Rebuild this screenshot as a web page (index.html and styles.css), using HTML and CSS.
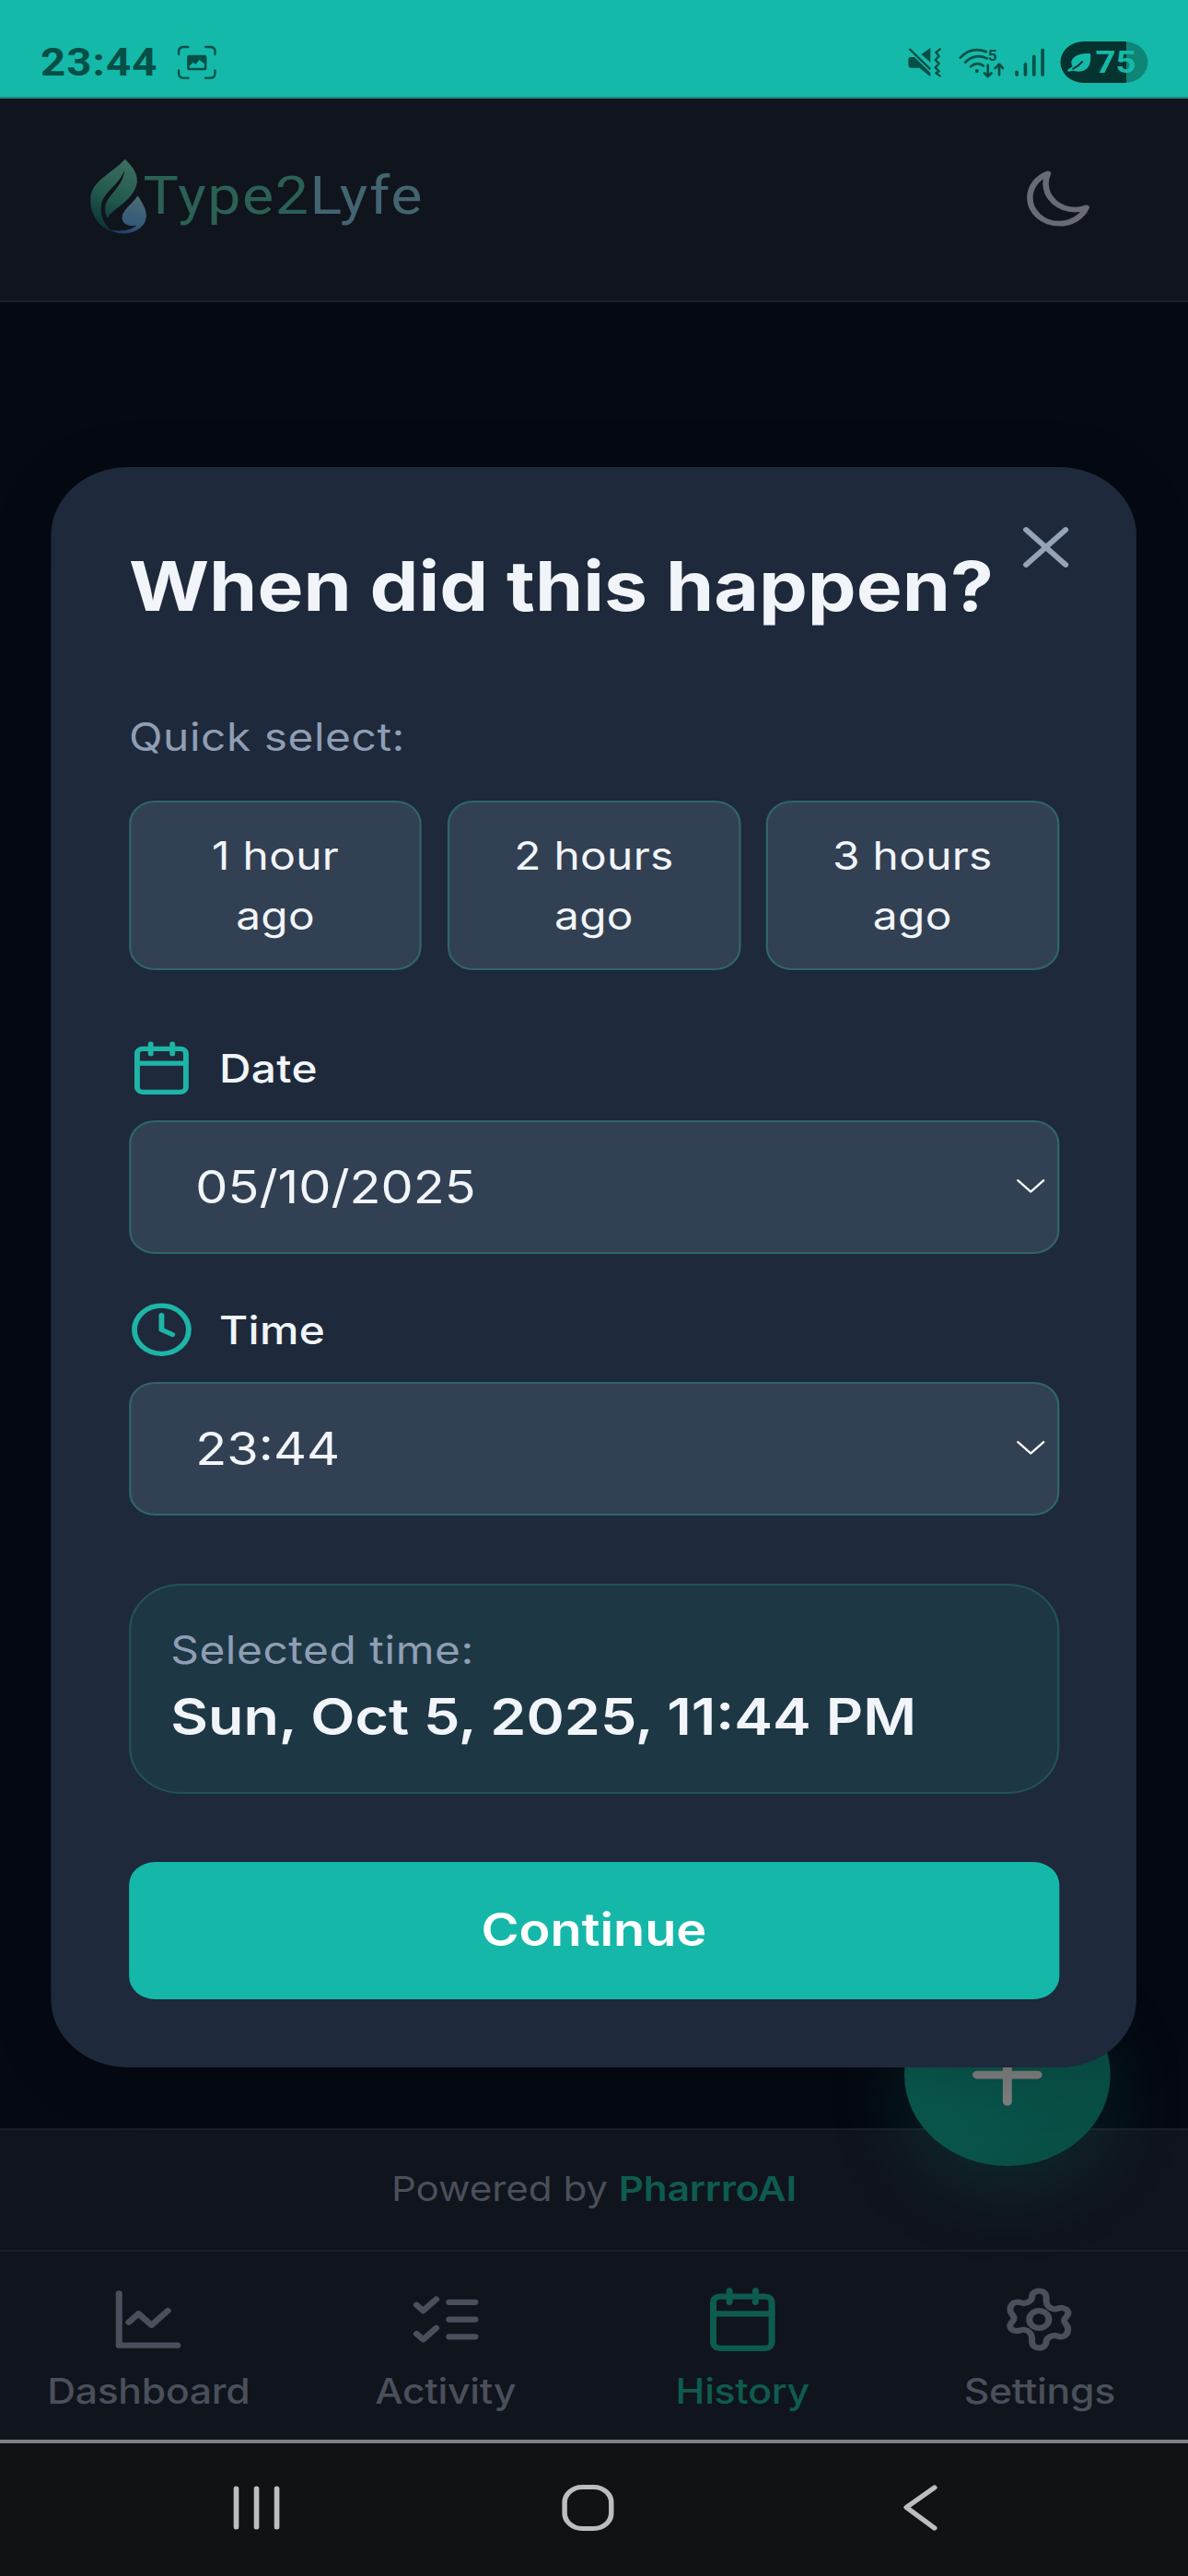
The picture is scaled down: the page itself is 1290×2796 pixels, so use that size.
FILE: index.html
```
<!DOCTYPE html>
<html lang="en">
<head>
<meta charset="utf-8">
<title>Type2Lyfe</title>
<link rel="stylesheet" href="styles.css">
</head>
<body>
<div class="screen">
  <div class="status-bar">
    <span class="clock">23:44</span>
    <svg class="shot-icon" viewBox="335 28 128 112" preserveAspectRatio="none" fill="none" stroke="currentColor" stroke-width="7" stroke-linecap="round">
      <path d="M341 58V48Q341 34 357 34H372M428 34H443Q459 34 459 48V58M459 110V120Q459 135 443 135H428M372 135H357Q341 135 341 120V110"/>
      <path stroke="none" fill="currentColor" fill-rule="evenodd" d="M375 60H425Q432 60 432 67V103Q432 110 425 110H375Q368 110 368 103V67Q368 60 375 60ZM376 96V102H424V88L408 76L396 90L388 84Z"/>
    </svg>
    <span class="grow"></span>
    <svg class="mute-icon" viewBox="45 62 112 98" preserveAspectRatio="none" fill="currentColor">
      <path d="M120 65V112L90 86ZM48 100Q48 95 54 95H68L120 146V159L84 130H58Q48 130 48 120Z"/>
      <path fill="none" stroke="currentColor" stroke-width="7" stroke-linecap="round" d="M53 70L118 133"/>
      <path fill="none" stroke="currentColor" stroke-width="7" stroke-linecap="round" stroke-linejoin="round" d="M151 69L138 80L148 92L136 104L148 116L136 129L148 141L138 147L151 156"/>
    </svg>
    <svg class="wifi-icon" viewBox="210 62 152 104" preserveAspectRatio="none" fill="none" stroke="currentColor" stroke-width="8" stroke-linecap="round" stroke-linejoin="round">
      <path d="M216 100Q250 62 300 80M232 115Q264 84 303 102M250 129Q270 112 291 126"/>
      <circle cx="270" cy="143" r="6" fill="currentColor" stroke="none"/>
      <path d="M306 124V160M294 150L306 161L318 150M343 156V122M330 134L343 121L355 134"/>
      <text class="wifi-band" x="306" y="111">5</text>
    </svg>
    <svg class="signal-icon" viewBox="393 62 100 98" preserveAspectRatio="none" stroke="currentColor" stroke-width="11" stroke-linecap="round">
      <path d="M400 144V152M428 118V152M456 93V152M484 72V152"/>
    </svg>
    <div class="battery">
      <svg class="leaf-icon" viewBox="565 78 82 70" preserveAspectRatio="none">
        <path fill="#15b9a9" d="M584 126C570 100 600 82 640 84Q643 84 643 88C645 122 634 143 604 143C592 143 588 137 574 143Q566 144 568 137Q576 133 584 126Z"/>
        <path fill="none" stroke="#05332f" stroke-width="6" stroke-linecap="round" d="M586 134Q604 126 616 111"/>
      </svg>
      <span>75</span>
    </div>
  </div>

  <header class="app-header">
    <div class="logo">
      <svg class="logo-mark" viewBox="52 394 188 248" preserveAspectRatio="none">
        <defs>
          <linearGradient id="leaf" x1="0.6" y1="0" x2="0.35" y2="1">
            <stop offset="0" stop-color="#3b6d60"/><stop offset="0.55" stop-color="#21584c"/><stop offset="1" stop-color="#0a3033"/>
          </linearGradient>
          <linearGradient id="drop" x1="0.6" y1="0" x2="0.4" y2="1">
            <stop offset="0" stop-color="#4b6c73"/><stop offset="0.75" stop-color="#33587a"/><stop offset="1" stop-color="#1d3d66"/>
          </linearGradient>
        </defs>
        <path fill="url(#leaf)" d="M167 396C125 445 55 465 55 530C55 585 90 622 128 634C100 612 86 580 90 548C96 500 150 482 165 432C164 480 120 505 106 540C100 558 103 578 111 588C128 556 200 530 207 470C209 435 183 412 167 396Z"/>
        <path fill="url(#drop)" d="M209 515C225 540 237 560 237 580C237 612 205 640 157 639C140 638 128 633 120 627C150 633 185 630 206 612C188 617 158 612 158 586C160 560 190 545 209 515Z"/>
      </svg>
      <span class="logo-text"><span class="logo-a">Type2</span><span class="logo-b">Lyfe</span></span>
    </div>
    <svg class="moon-icon" viewBox="0 0 24 24" fill="none" stroke="currentColor" stroke-width="2" stroke-linecap="round" stroke-linejoin="round">
      <path d="M21.752 15.002A9.72 9.72 0 0 1 18 15.75c-5.385 0-9.75-4.365-9.75-9.75 0-1.33.266-2.597.748-3.752A9.753 9.753 0 0 0 3 11.25C3 16.635 7.365 21 12.75 21a9.753 9.753 0 0 0 9.002-5.998Z"/>
    </svg>
  </header>

  <main class="page"></main>

  <footer class="powered"><p>Powered by <b>PharrroAI</b></p></footer>

  <nav class="tabs">
    <a class="tab">
      <svg class="icon" viewBox="0 0 24 24"><path d="M3 3v18h18M6 13l3-3 4 4 5-5"/></svg>
      <span>Dashboard</span>
    </a>
    <a class="tab">
      <svg class="icon" viewBox="0 0 24 24"><path d="M3 7l2 2 4-4M3 17l2 2 4-4M13 6h8M13 12h8M13 18h8"/></svg>
      <span>Activity</span>
    </a>
    <a class="tab active">
      <svg class="icon" viewBox="0 0 24 24"><path d="M8 2v4M16 2v4M3 10h18"/><rect x="3" y="4" width="18" height="18" rx="2"/></svg>
      <span>History</span>
    </a>
    <a class="tab">
      <svg class="icon" viewBox="0 0 24 24"><path d="M9.8 4.4C9.8 3 10.7 2.1 12 2.1S14.2 3.1 14.2 4.4V5.6C14.2 7 15.2 8.2 16.5 8.4C17.6 8.5 18.2 7.9 19.1 8C20.4 8.2 21.1 9.1 20.9 10.1C20.7 11 19.7 11.5 19.7 12.4C19.7 13.4 20.9 14 20.9 15.4C20.9 17 19.9 18 18.8 18C17.8 18.1 17.4 17.5 16.6 17.6C15.2 17.8 14.2 18.8 14.2 19.6C14.2 21 13.3 21.9 12 21.9S9.8 20.9 9.8 19.6V18.4C9.8 17 8.8 15.8 7.5 15.6C6.4 15.5 5.8 16.1 4.9 16C3.6 15.8 2.9 14.9 3.1 13.9C3.3 13 4.3 12.5 4.3 11.6C4.3 10.6 3.1 10 3.1 8.6C3.1 7 4.1 6 5.2 6C6.2 5.9 6.6 6.5 7.4 6.4C8.8 6.2 9.8 5.2 9.8 4.4Z"/><circle cx="12" cy="12" r="3"/></svg>
      <span>Settings</span>
    </a>
  </nav>

  <div class="system-nav">
    <svg class="recents" viewBox="0 0 48 50"><path d="M4 4V46M23.5 4V46M43 4V46"/></svg>
    <svg class="home" viewBox="0 0 50 50"><rect x="2.5" y="2.5" width="45" height="45" rx="17"/></svg>
    <svg class="back" viewBox="0 0 34 50"><path d="M31 3L4 24.5L31 47"/></svg>
  </div>

  <button class="fab" aria-label="Add">
    <svg viewBox="0 0 24 24"><path d="M12 5v14M5 12h14"/></svg>
  </button>

  <section class="modal">
    <button class="close" aria-label="Close"><svg viewBox="0 0 44 44"><path d="M3 3L41 41M41 3L3 41"/></svg></button>
    <h1>When did this happen?</h1>
    <p class="hint">Quick select:</p>
    <div class="quick">
      <button>1 hour<br>ago</button>
      <button>2 hours<br>ago</button>
      <button>3 hours<br>ago</button>
    </div>
    <div class="label">
      <svg class="icon" viewBox="0 0 24 24"><path d="M8 2v4M16 2v4M3 10h18"/><rect x="3" y="4" width="18" height="18" rx="2"/></svg>
      <span>Date</span>
    </div>
    <div class="field"><span>05/10/2025</span><svg viewBox="0 0 27 15"><path d="M1.2 1.2L13.5 13.5L25.8 1.2"/></svg></div>
    <div class="label label-time">
      <svg class="icon" viewBox="0 0 24 24"><circle cx="12" cy="12" r="10"/><path d="M12 6v6l4 2"/></svg>
      <span>Time</span>
    </div>
    <div class="field"><span>23:44</span><svg viewBox="0 0 27 15"><path d="M1.2 1.2L13.5 13.5L25.8 1.2"/></svg></div>
    <div class="selected">
      <p class="hint">Selected time:</p>
      <p class="value">Sun, Oct 5, 2025, 11:44 PM</p>
    </div>
    <button class="continue">Continue</button>
  </section>
</div>
</body>
</html>
```
FILE: styles.css
```
* { box-sizing: border-box; margin: 0; padding: 0; }

body {
  width: 1290px;
  height: 2796px;
  overflow: hidden;
  background: #050912;
}

/* The whole display is drawn 13% wider than its natural proportions. */
.screen {
  position: relative;
  display: flex;
  flex-direction: column;
  width: 1141.6px;
  height: 2796px;
  overflow: hidden;
  transform: scaleX(1.13);
  transform-origin: 0 0;
  background: #050912;
  font-family: Inter, "Liberation Sans", sans-serif;
  font-size: 42.3px;
  color: #f1f5f9;
}

button { border: 0; font: inherit; color: inherit; }

.icon {
  fill: none;
  stroke: currentColor;
  stroke-width: 2;
  stroke-linecap: round;
  stroke-linejoin: round;
}

/* Status bar */
.status-bar {
  display: flex;
  flex: none;
  align-items: center;
  height: 107px;
  padding: 30px 38.7px 0 39px;
  border-bottom: 2px solid #22897f;
  background: #15b9a9;
  color: #064f47;
}
.clock { font: 700 42px/50px Roboto, sans-serif; letter-spacing: 0.9px; }
.shot-icon { width: 37.8px; height: 37.3px; margin-left: 18.3px; }
.grow { flex: 1; }
.mute-icon { width: 33px; height: 32.7px; margin-right: 15.6px; }
.wifi-icon { width: 44.8px; height: 34.7px; margin-right: 9px; }
.wifi-band { font: 700 52px Roboto, sans-serif; fill: currentColor; stroke: none; }
.signal-icon { width: 29.5px; height: 32.7px; margin-right: 14.7px; }
.battery {
  display: flex;
  align-items: center;
  gap: 3px;
  width: 84px;
  height: 45px;
  padding-left: 6.5px;
  border-radius: 22.5px;
  background: linear-gradient(90deg, #05332f 75.3%, #0f8577 75.3%);
  color: #15b9a9;
  font: 700 34px/45px Roboto, sans-serif;
}
.leaf-icon { width: 24.2px; height: 23.3px; }

/* App header */
.app-header {
  display: flex;
  flex: none;
  align-items: center;
  justify-content: space-between;
  height: 221px;
  padding: 0 91px 7px 86.4px;
  border-bottom: 2px solid #1b202b;
  background: #10141c;
}
.logo { display: flex; align-items: center; }
.logo-mark { width: 55.5px; height: 82.6px; }
.logo-text { margin-left: -4.3px; font: 400 57px/70px Roboto, sans-serif; letter-spacing: 1.4px; }
.logo-a { color: #2b6154; }
.logo-b { color: #436471; }
.moon-icon { width: 69.4px; height: 69.4px; margin-top: 8px; color: #686b73; }

.page { flex: 1; }

/* Footer */
.powered {
  flex: none;
  height: 132px;
  border-top: 2px solid #1a1f28;
  background: #10141c;
  color: #4a4f5b;
  font-size: 37.4px;
  letter-spacing: -0.1px;
  line-height: 128px;
  text-align: center;
}
.powered b { font-weight: 600; color: #0e5b50; }

.tabs {
  display: grid;
  flex: none;
  grid-template-columns: repeat(4, 1fr);
  height: 206px;
  border-top: 2px solid #1a1f28;
  background: #10141c;
}
.tab {
  display: flex;
  flex-direction: column;
  align-items: center;
  padding-top: 36px;
  color: #4a4f5b;
  font-size: 37.8px;
  font-weight: 500;
  letter-spacing: -0.25px;
  line-height: 50px;
}
.tab .icon { width: 75px; height: 75px; margin-bottom: 15px; }
.tab.active { color: #0e5b50; }

/* System navigation */
.system-nav {
  display: flex;
  flex: none;
  align-items: center;
  height: 148px;
  padding: 0 0 5px 222.5px;
  border-top: 4px solid #7c8088;
  background: #111216;
}
.system-nav svg { height: 50px; fill: none; stroke: #bdbdbf; stroke-width: 5; stroke-linecap: round; stroke-linejoin: round; }
.recents { width: 48px; margin-right: 269px; }
.home { width: 50px; margin-right: 277px; }
.back { width: 34px; }

/* Floating add button, partly beneath the dialog */
.fab {
  position: absolute;
  left: 869px;
  top: 2153px;
  display: grid;
  place-items: center;
  width: 198px;
  height: 198px;
  border-radius: 50%;
  background: linear-gradient(135deg, #0a5d53, #084c43);
  box-shadow: 0 25px 75px rgba(10, 93, 83, 0.3);
}
.fab svg { width: 100px; height: 100px; fill: none; stroke: #808080; stroke-width: 2.1; stroke-linecap: round; }

/* Dialog */
.modal {
  position: absolute;
  left: 49.4px;
  top: 506.5px;
  width: 1042.7px;
  height: 1737.5px;
  padding: 79px 74.5px 0;
  border-radius: 74px;
  background: #1e293b;
  box-shadow: 0 10px 60px rgba(5, 10, 14, 0.2);
}
.close { position: absolute; top: 65px; right: 65px; width: 44px; height: 44px; background: none; }
.close svg { display: block; fill: none; stroke: #94a3b8; stroke-width: 5.5; stroke-linecap: round; }
.modal h1 { font-size: 74.3px; line-height: 100px; font-weight: 700; white-space: nowrap; }
.hint { color: #8f9eb4; line-height: 60px; letter-spacing: 0.5px; }
.modal > .hint { margin-top: 84px; }
.quick {
  display: grid;
  grid-template-columns: repeat(3, 1fr);
  gap: 24.5px;
  margin-top: 39.5px;
}
.quick button, .field {
  border: 2px solid #2e656b;
  border-radius: 25px;
  background: #324053;
}
.quick button { height: 184px; padding-top: 1px; line-height: 64.5px; letter-spacing: 0.3px; }
.label {
  display: flex;
  align-items: center;
  gap: 24.2px;
  height: 62px;
  margin-top: 75px;
  font-weight: 500;
  letter-spacing: 0.3px;
}
.label .icon { width: 62.5px; height: 62.5px; color: #1eb5a6; }
.label-time { margin-top: 51.5px; }
.field {
  display: flex;
  align-items: center;
  justify-content: space-between;
  height: 145.3px;
  margin-top: 25.5px;
  padding: 0 11.3px 1px 62px;
  font-size: 49.4px;
}
.field svg { width: 27px; height: 15px; fill: none; stroke: #f8fafc; stroke-width: 2.3; stroke-linecap: round; stroke-linejoin: round; }
.selected {
  height: 228px;
  margin-top: 74px;
  padding: 40px 38px 0;
  border: 2px solid #22525a;
  border-radius: 50px;
  background: #1e3745;
}
.value { font-size: 55.5px; font-weight: 600; line-height: 83px; white-space: nowrap; }
.continue {
  display: block;
  width: 100%;
  height: 149px;
  margin-top: 73.5px;
  padding-bottom: 2px;
  border-radius: 25px;
  background: #15b8a8;
  color: #fff;
  font-size: 49.4px;
  font-weight: 600;
}
```
